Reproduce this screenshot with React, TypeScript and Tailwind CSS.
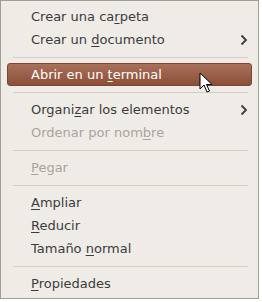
import React from "react";

type Item = {
  label: React.ReactNode;
  disabled?: boolean;
  submenu?: boolean;
  active?: boolean;
};

const U = ({ children }: { children: React.ReactNode }) => (
  <span className="underline decoration-1 underline-offset-[2px]">{children}</span>
);

const Arrow = () => (
  <svg width="8" height="12" viewBox="0 0 8 12" className="absolute right-[10px] top-1/2 -translate-y-1/2">
    <path d="M1.5 1.5 L6 6 L1.5 10.5" fill="none" stroke="#3c3c3c" strokeWidth="1.8" />
  </svg>
);

const Row = ({ label, disabled, submenu, active }: Item) => {
  if (active) {
    return (
      <div className="h-[23px] px-[6px]">
        <div className="relative flex h-full items-center rounded-[3px] border border-[#7d4634] bg-gradient-to-b from-[#a9705a] to-[#8c5039] pl-[23px] text-white">
          {label}
        </div>
      </div>
    );
  }
  return (
    <div
      className={`relative flex h-[23px] items-center pl-[30px] ${
        disabled ? "text-[#a9a49d]" : "text-[#3c3c3c]"
      }`}
    >
      {label}
      {submenu && <Arrow />}
    </div>
  );
};

const Sep = () => (
  <div className="pl-[12px] pr-[10px] pt-[6px] pb-[5px]">
    <div className="h-px bg-[#d3cdc5]" />
  </div>
);

export default function App() {
  return (
    <div className="h-[302px] w-[262px] bg-white">
      <div
        className="relative h-[299px] w-[259px] border border-[#a39d95] bg-[#efebe7] pt-[4px] text-[13px] leading-none"
        style={{ fontFamily: '"DejaVu Sans", sans-serif' }}
      >
        <Row label={<span>Crear una ca<U>r</U>peta</span>} />
        <Row label={<span>Crear un <U>d</U>ocumento</span>} submenu />
        <Sep />
        <Row label={<span>Abrir en un <U>t</U>erminal</span>} active />
        <Sep />
        <Row label={<span>Organi<U>z</U>ar los elementos</span>} submenu />
        <Row label={<span>Ordenar por nom<U>b</U>re</span>} disabled />
        <Sep />
        <Row label={<span><U>P</U>egar</span>} disabled />
        <Sep />
        <Row label={<span><U>A</U>mpliar</span>} />
        <Row label={<span><U>R</U>educir</span>} />
        <Row label={<span>Tamaño <U>n</U>ormal</span>} />
        <Sep />
        <Row label={<span><U>P</U>ropiedades</span>} />

        <svg
          width="14"
          height="22"
          viewBox="0 0 14 22"
          className="absolute left-[198px] top-[71px]"
        >
          <path
            d="M1 1 L1 17 L5 13 L8 20 L10.5 19 L7.5 12.5 L13 12.5 Z"
            fill="white"
            stroke="black"
            strokeWidth="1"
            strokeLinejoin="round"
          />
        </svg>
      </div>
    </div>
  );
}
